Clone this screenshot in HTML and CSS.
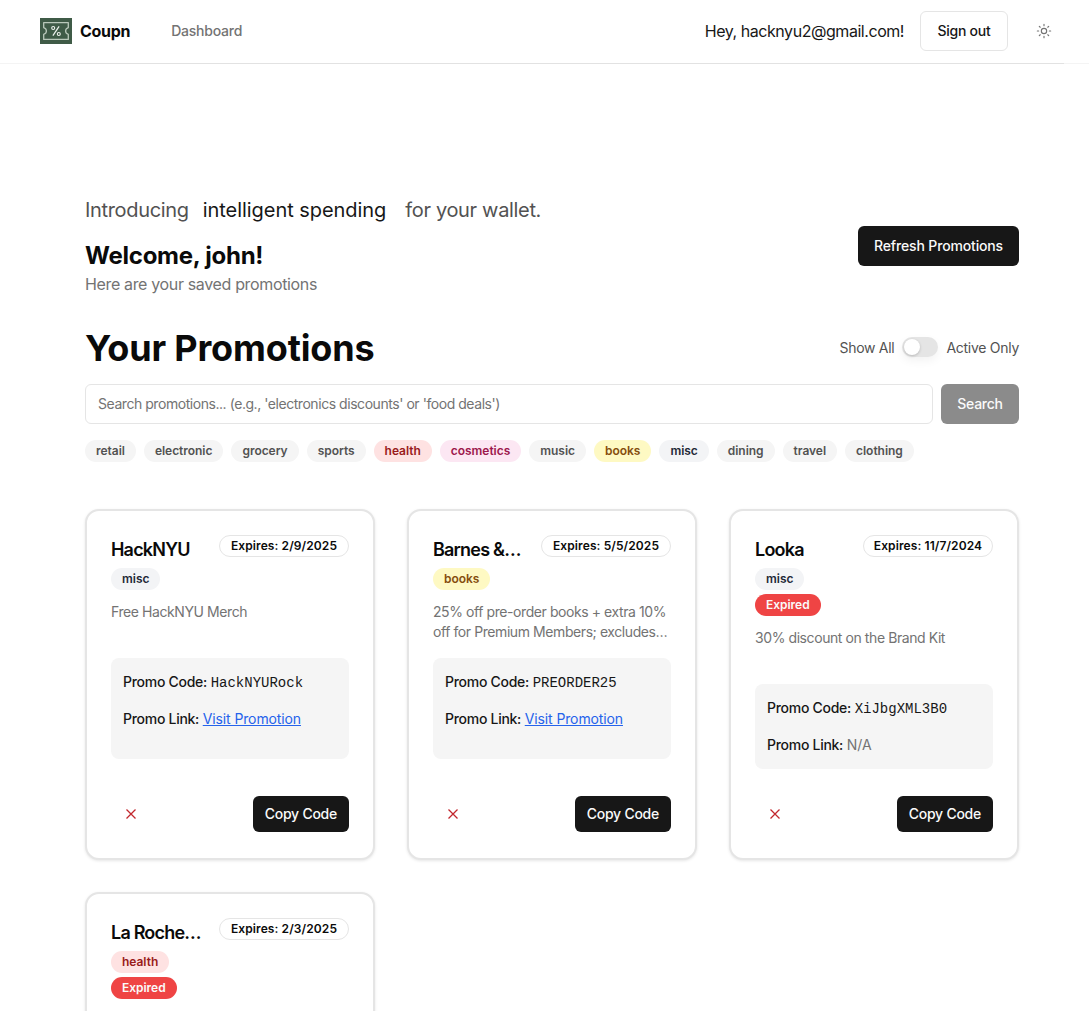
FILE: index.html
```html
<!DOCTYPE html>
<html lang="en">
<head>
<meta charset="utf-8">
<title>Coupn</title>
<link rel="stylesheet" href="styles.css">
</head>
<body>
<header class="topbar">
  <div class="topbar-inner">
    <a class="brand" href="#">
      <svg class="logo" viewBox="0 0 32 26" aria-hidden="true">
        <rect width="32" height="26" fill="#3f5b47"/>
        <path d="M3.7 4.6H28.3V9.6Q25.6 10.6 25.6 13T28.3 16.4V21.4H3.7V16.4Q6.4 15.4 6.4 13T3.7 9.6Z" fill="none" stroke="#b9c8ba" stroke-width="1.3" stroke-linejoin="round"/>
        <path d="M12.9 17.6L19.1 8.4" stroke="#eef2ee" stroke-width="1.2" fill="none"/>
        <circle cx="13.2" cy="10" r="1.5" fill="none" stroke="#eef2ee" stroke-width="1.1"/>
        <circle cx="18.8" cy="16" r="1.5" fill="none" stroke="#eef2ee" stroke-width="1.1"/>
      </svg>
      <span class="brand-name">Coupn</span>
    </a>
    <a class="nav-link" href="#">Dashboard</a>
    <div class="topbar-right">
      <span class="greeting">Hey, hacknyu2@gmail.com!</span>
      <button class="btn btn-outline">Sign out</button>
      <button class="theme-btn" aria-label="Toggle theme">
        <svg viewBox="0 0 24 24" class="sun" aria-hidden="true">
          <circle cx="12" cy="12" r="4"/>
          <path d="M12 2v2M12 20v2M4.93 4.93l1.41 1.41M17.66 17.66l1.41 1.41M2 12h2M20 12h2M6.34 17.66l-1.41 1.41M19.07 4.93l-1.41 1.41"/>
        </svg>
      </button>
    </div>
  </div>
</header>

<main class="page">
  <section class="hero">
    <div>
      <p class="intro"><span>Introducing</span><span class="intro-strong">intelligent spending</span><span class="intro-last">for your wallet.</span></p>
      <h2 class="welcome">Welcome, john!</h2>
      <p class="sub">Here are your saved promotions</p>
    </div>
    <button class="btn btn-dark btn-lg">Refresh Promotions</button>
  </section>

  <section class="title-row">
    <h1 class="title">Your Promotions</h1>
    <div class="filter">
      <span>Show All</span>
      <span class="switch"><span class="thumb"></span></span>
      <span>Active Only</span>
    </div>
  </section>

  <form class="search">
    <input class="search-input" type="text" placeholder="Search promotions... (e.g., 'electronics discounts' or 'food deals')">
    <button class="btn btn-muted" type="button">Search</button>
  </form>

  <div class="tags">
    <span class="tag">retail</span>
    <span class="tag">electronic</span>
    <span class="tag">grocery</span>
    <span class="tag">sports</span>
    <span class="tag tag-health">health</span>
    <span class="tag tag-cosmetics">cosmetics</span>
    <span class="tag">music</span>
    <span class="tag tag-books">books</span>
    <span class="tag tag-misc">misc</span>
    <span class="tag">dining</span>
    <span class="tag">travel</span>
    <span class="tag">clothing</span>
  </div>

  <section class="cards">
    <article class="card">
      <div class="card-head">
        <h3 class="card-title">HackNYU</h3>
        <span class="expires">Expires: 2/9/2025</span>
      </div>
      <div class="card-tags"><span class="tag tag-misc">misc</span></div>
      <p class="desc">Free HackNYU Merch</p>
      <div class="promo promo-linked">
        <p class="promo-line"><b>Promo Code:</b> <code>HackNYURock</code></p>
        <p class="promo-line"><b>Promo Link:</b> <a href="#">Visit Promotion</a></p>
      </div>
      <div class="card-foot">
        <button class="remove" aria-label="Delete"><svg viewBox="0 0 12 12" aria-hidden="true"><path d="M1.5 1.5l9 9M10.5 1.5l-9 9"/></svg></button>
        <button class="btn btn-dark">Copy Code</button>
      </div>
    </article>

    <article class="card">
      <div class="card-head">
        <h3 class="card-title">Barnes &amp; Noble</h3>
        <span class="expires">Expires: 5/5/2025</span>
      </div>
      <div class="card-tags"><span class="tag tag-books">books</span></div>
      <p class="desc">25% off pre-order books + extra 10% off for Premium Members; excludes certain items and gift cards</p>
      <div class="promo promo-linked">
        <p class="promo-line"><b>Promo Code:</b> <code>PREORDER25</code></p>
        <p class="promo-line"><b>Promo Link:</b> <a href="#">Visit Promotion</a></p>
      </div>
      <div class="card-foot">
        <button class="remove" aria-label="Delete"><svg viewBox="0 0 12 12" aria-hidden="true"><path d="M1.5 1.5l9 9M10.5 1.5l-9 9"/></svg></button>
        <button class="btn btn-dark">Copy Code</button>
      </div>
    </article>

    <article class="card">
      <div class="card-head">
        <h3 class="card-title">Looka</h3>
        <span class="expires">Expires: 11/7/2024</span>
      </div>
      <div class="card-tags"><span class="tag tag-misc">misc</span><span class="tag tag-expired">Expired</span></div>
      <p class="desc">30% discount on the Brand Kit</p>
      <div class="promo">
        <p class="promo-line"><b>Promo Code:</b> <code>XiJbgXML3B0</code></p>
        <p class="promo-line"><b>Promo Link:</b> <span class="na">N/A</span></p>
      </div>
      <div class="card-foot">
        <button class="remove" aria-label="Delete"><svg viewBox="0 0 12 12" aria-hidden="true"><path d="M1.5 1.5l9 9M10.5 1.5l-9 9"/></svg></button>
        <button class="btn btn-dark">Copy Code</button>
      </div>
    </article>

    <article class="card">
      <div class="card-head">
        <h3 class="card-title">La Roche-Posay</h3>
        <span class="expires">Expires: 2/3/2025</span>
      </div>
      <div class="card-tags"><span class="tag tag-health">health</span><span class="tag tag-expired">Expired</span></div>
      <p class="desc">20% off sitewide skincare</p>
      <div class="promo">
        <p class="promo-line"><b>Promo Code:</b> <code>SKIN20</code></p>
        <p class="promo-line"><b>Promo Link:</b> <span class="na">N/A</span></p>
      </div>
      <div class="card-foot">
        <button class="remove" aria-label="Delete"><svg viewBox="0 0 12 12" aria-hidden="true"><path d="M1.5 1.5l9 9M10.5 1.5l-9 9"/></svg></button>
        <button class="btn btn-dark">Copy Code</button>
      </div>
    </article>
  </section>
</main>
</body>
</html>
```
FILE: styles.css
```css
* { box-sizing: border-box; }
html, body { height: 100%; overflow: hidden; }
body {
  margin: 0;
  background: #fff;
  color: #0a0a0a;
  font-family: Inter, "Liberation Sans", sans-serif;
  font-size: 14px;
}
p, h1, h2, h3 { margin: 0; }
a { text-decoration: none; color: inherit; }
button { font-family: inherit; cursor: pointer; }

.topbar { border-bottom: 1px solid #f4f4f4; height: 64px; padding: 0 25px 0 40px; margin-bottom: -1px; }
.topbar-inner { height: 64px; border-bottom: 1px solid #e2e2e2; display: flex; align-items: center; padding-bottom: 1px; }
.brand { display: flex; align-items: center; gap: 8px; }
.logo { width: 32px; height: 26px; display: block; }
.brand-name { font-size: 16px; font-weight: 700; letter-spacing: -0.3px; }
.nav-link { margin-left: 41px; padding-bottom: 1px; color: #737373; font-weight: 500; letter-spacing: -0.22px; }
.topbar-right { margin-left: auto; display: flex; align-items: center; }
.greeting { font-size: 16px; color: #171717; letter-spacing: -0.45px; margin-right: 16px; }
.theme-btn { width: 40px; height: 40px; margin-left: 16px; padding: 0; border: 0; background: none; display: flex; align-items: center; justify-content: center; }
.sun { width: 16px; height: 16px; fill: none; stroke: #737373; stroke-width: 1.7; stroke-linecap: round; }

.btn { height: 36px; padding: 0 12px 1px; border: 0; border-radius: 6px; font-size: 14px; font-weight: 500; white-space: nowrap; letter-spacing: -0.25px; }
.btn-outline { height: 40px; width: 88px; padding: 0 0 1px; background: #fff; color: #171717; border: 1px solid #e5e5e5; }
.btn-dark { background: #171717; color: #fafafa; }
.btn-lg { height: 40px; padding: 0 16px 1px; letter-spacing: -0.15px; }
.btn-muted { height: 40px; width: 78px; padding: 0 0 1px; background: #8b8b8b; color: #fafafa; }

.page { padding: 133px 70px 0 85px; }
.hero { display: flex; justify-content: space-between; align-items: center; }
.intro { font-size: 20px; line-height: 28px; color: #525252; letter-spacing: -0.33px; }
.intro-strong { color: #171717; margin: 0 19px 0 14px; letter-spacing: -0.05px; }
.welcome { margin-top: 16px; font-size: 24px; line-height: 32px; font-weight: 700; letter-spacing: -0.25px; }
.sub { font-size: 16px; line-height: 24px; color: #737373; letter-spacing: -0.35px; }

.title-row { margin-top: 31px; display: flex; justify-content: space-between; align-items: center; }
.title { font-size: 36px; line-height: 40px; font-weight: 700; letter-spacing: -0.15px; padding-top: 1px; margin-bottom: -1px; }
.filter { display: flex; align-items: center; gap: 8px; color: #525252; letter-spacing: -0.28px; }
.switch { width: 36px; height: 20px; border-radius: 10px; background: #e5e5e5; padding: 2px; box-shadow: 0 4px 10px rgba(0,0,0,.05); }
.thumb { display: block; width: 16px; height: 16px; border-radius: 50%; background: #fff; box-shadow: 0 1px 3px rgba(0,0,0,.2); }

.search { margin-top: 17px; display: flex; gap: 8px; }
.search-input { flex: 1; height: 40px; padding: 0 12px 1px; border: 1px solid #e5e5e5; border-radius: 6px; font: inherit; letter-spacing: -0.45px; outline: 0; }
.search-input::placeholder { color: #737373; opacity: 1; }

.tags { margin-top: 16px; display: flex; gap: 8px; }
.tag { height: 22px; padding: 0 11px; border-radius: 11px; background: #f5f5f5; color: #525252; font-size: 12px; line-height: 22px; font-weight: 600; letter-spacing: -0.03px; }
.tag-health { background: #fee2e2; color: #991b1b; }
.tag-cosmetics { background: #fce7f3; color: #9d174d; }
.tag-books { background: #fef9c3; color: #854d0e; }
.tag-misc { background: #f3f4f6; color: #1f2937; }
.tag-expired { background: #ef4444; color: #fafafa; }

.cards { margin-top: 47px; display: grid; grid-template-columns: repeat(3, 290px); gap: 32px; }
.card { min-height: 350px; padding: 24px 24px 26px; border: 2px solid #e5e5e5; border-radius: 14px; background: #fff; box-shadow: 0 1px 3px rgba(0,0,0,.1); display: flex; flex-direction: column; }
.card-head { display: flex; justify-content: space-between; align-items: flex-start; padding-top: 1px; }
.card-title { width: 92px; font-size: 18px; line-height: 28px; font-weight: 600; letter-spacing: -0.8px; white-space: nowrap; overflow: hidden; text-overflow: ellipsis; }
.expires { width: 130px; height: 22px; margin-top: -1px; border: 1px solid #e5e5e5; border-radius: 11px; font-size: 12px; line-height: 20px; font-weight: 600; letter-spacing: 0.1px; text-align: center; white-space: nowrap; color: #0a0a0a; }
.card-tags { margin-top: 4px; display: flex; flex-direction: column; align-items: flex-start; gap: 4px; }
.desc { margin-top: 12px; min-height: 40px; line-height: 20px; color: #737373; letter-spacing: -0.42px; display: -webkit-box; -webkit-box-orient: vertical; -webkit-line-clamp: 2; overflow: hidden; }
.promo { margin-top: 16px; padding: 12px; border-radius: 8px; background: #f5f5f5; }
.promo-linked { padding-bottom: 28px; }
.promo-line { line-height: 24px; color: #171717; font-weight: 400; letter-spacing: -0.28px; }
.promo-line + .promo-line { margin-top: 12px; }
.promo-line b { font-weight: 500; }
.promo-line code { font-family: "Liberation Mono", monospace; font-size: 14px; letter-spacing: 0; }
.promo-line a { color: #2563eb; text-decoration: underline; letter-spacing: -0.12px; }
.na { color: #737373; letter-spacing: 0; }
.card-foot { margin-top: auto; padding-top: 27px; display: flex; justify-content: space-between; align-items: center; }
.remove { width: 40px; height: 36px; padding: 0; border: 0; background: none; display: flex; align-items: center; justify-content: center; }
.remove svg { width: 12px; height: 12px; fill: none; stroke: #c2272d; stroke-width: 1.3; }
```
